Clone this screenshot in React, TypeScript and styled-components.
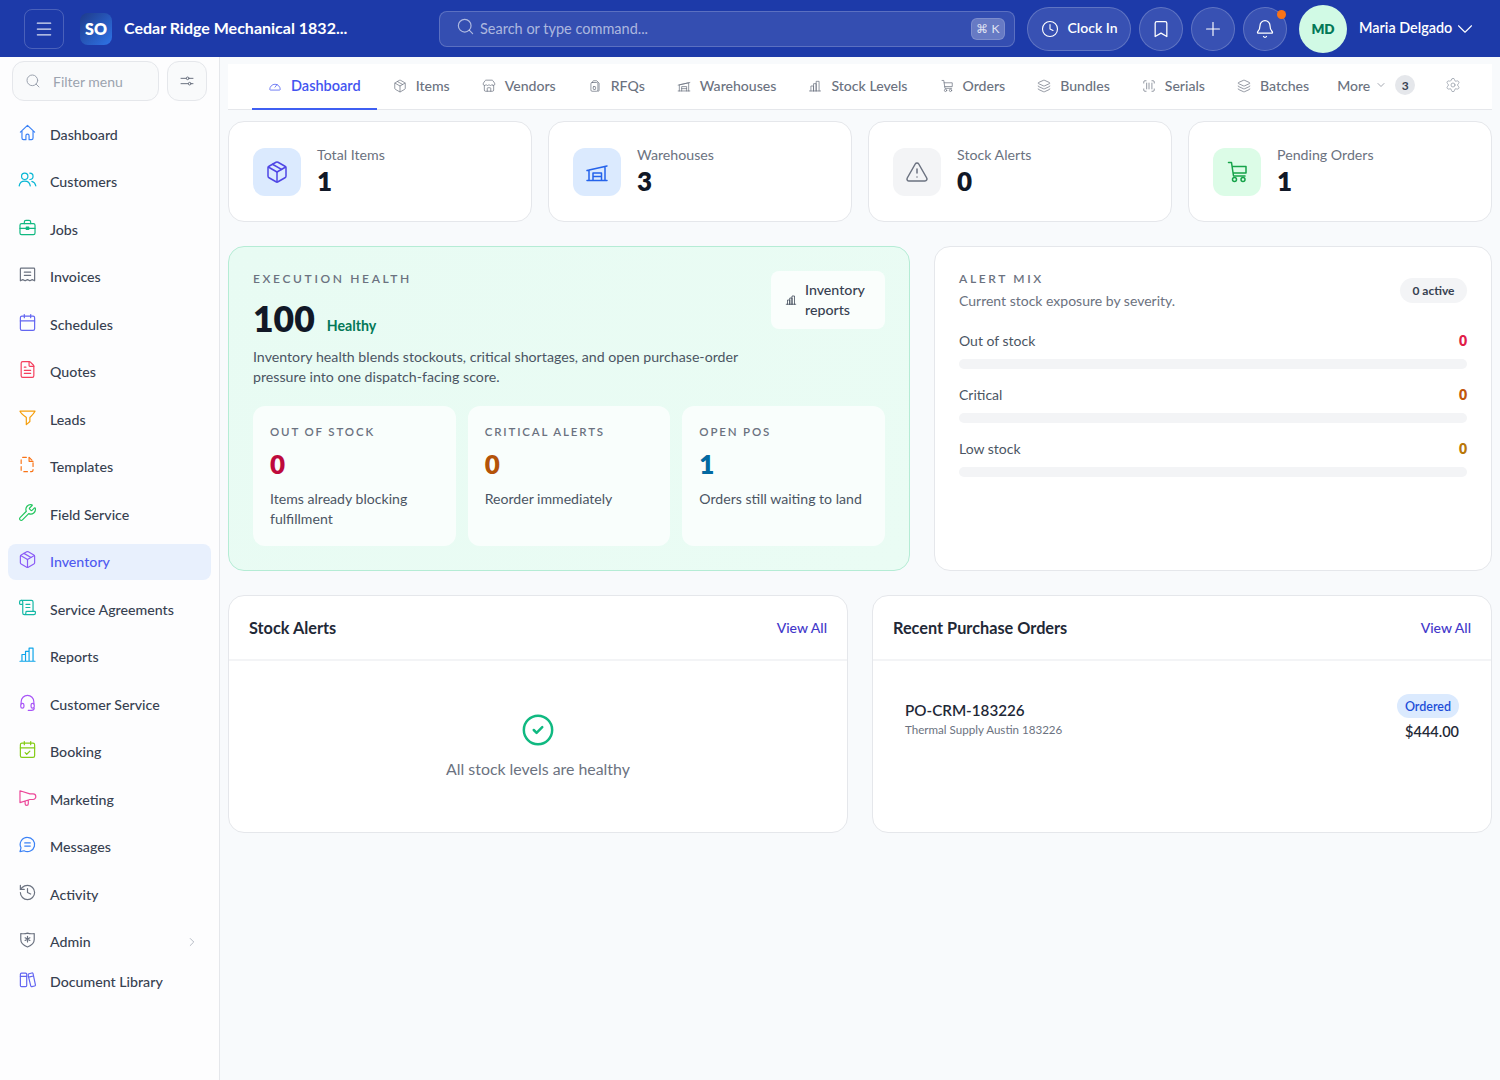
import React from "react";
import styled, { createGlobalStyle } from "styled-components";
import {
  Bell, Bookmark, Calendar, CalendarCheck, ChevronDown, ChevronRight, CircleCheck, Clock,
  FileText, History, Layers, Menu, Package, Plus, ScanBarcode, ScrollText, Search, Settings,
  Store, TriangleAlert, Wrench,
} from "lucide-react";

const font = `"Lato", "Noto Sans", sans-serif`;

const GlobalStyle = createGlobalStyle`
  * { box-sizing: border-box; }
  html, body { margin: 0; padding: 0; background: #f8fafc; font-family: ${font}; }
  #root { min-height: 1080px; }
`;

type IconProps = { size?: number; strokeWidth?: number; color?: string };

const Svg = ({ size = 20, strokeWidth = 1.5, color = "currentColor", children }: IconProps & { children: React.ReactNode }) => (
  <svg width={size} height={size} viewBox="0 0 24 24" fill="none" stroke={color} strokeWidth={strokeWidth} strokeLinecap="round" strokeLinejoin="round" style={{ flexShrink: 0 }}>
    {children}
  </svg>
);

const HomeIcon = (p: IconProps) => (
  <Svg {...p}><path d="M3 11.5 12 3l9 8.5M5 9.5V19a2 2 0 0 0 2 2h3v-5a2 2 0 0 1 4 0v5h3a2 2 0 0 0 2-2V9.5" /></Svg>
);
const UsersIcon = (p: IconProps) => (
  <Svg {...p}><circle cx="8.5" cy="8" r="4" /><path d="M1.5 20c.6-3.800 3.200-6 7-6s6.400 2.200 7 6M15 4a4 4 0 0 1 0 8M17.500 14.300c2.800.7 4.400 2.800 5 5.700" /></Svg>
);
const BriefcaseIcon = (p: IconProps) => (
  <Svg {...p}>
    <rect x="2.500" y="7" width="19" height="14" rx="2" />
    <path d="M8 7V5a2 2 0 0 1 2-2h4a2 2 0 0 1 2 2v2M2.500 13h19M10.500 11.500h3v3h-3z" />
  </Svg>
);
const ReceiptIcon = (p: IconProps) => (
  <Svg {...p}><path d="M3 5a1 1 0 0 1 1-1h16a1 1 0 0 1 1 1v15l-3-1.500-3 1.500-3-1.500-3 1.500-3-1.500L3 20zM8 9h8M8 13h8" /></Svg>
);
const FunnelIcon = (p: IconProps) => (
  <Svg {...p}><path d="M2.500 4h19c-1.500 3-4.500 6-6.500 8v5l-4.500 4v-9C8 10 4 7 2.500 4z" /></Svg>
);
const DashedFileIcon = (p: IconProps) => (
  <Svg {...p}>
    <path d="M6 3h8l5 5v11a2 2 0 0 1-2 2H6a2 2 0 0 1-2-2V5a2 2 0 0 1 2-2z" strokeDasharray="4.500 4" />
    <path d="M14 3v5h5" />
  </Svg>
);
const ChartIcon = (p: IconProps) => (
  <Svg {...p}><path d="M2.500 20.500h19M5 20.500V12h4.500v8.500M9.500 20.500V8H14v12.500M14 20.500V4h5v16.500" /></Svg>
);
const HeadsetIcon = (p: IconProps) => (
  <Svg {...p}>
    <path d="M4 14v-3a8 8 0 0 1 16 0v3" />
    <rect x="3.500" y="13" width="4" height="6" rx="2" />
    <rect x="16.500" y="13" width="4" height="6" rx="2" />
    <path d="M20.500 19c0 2-1.500 3-3.500 3h-4" />
  </Svg>
);
const MegaphoneIcon = (p: IconProps) => (
  <Svg {...p}><path d="M2.500 3.500 15 7.500h4a3.500 3.500 0 0 1 0 7h-4l-12.500 4zM9 16.500V20a2 2 0 0 0 4 0v-4" /></Svg>
);
const BubbleIcon = (p: IconProps) => (
  <Svg {...p}><path d="M12 3a9 9 0 1 1-4.300 16.900L2.500 21l1.300-4.800A9 9 0 0 1 12 3zM8.500 10h7M8.500 14h7" /></Svg>
);
const ShieldStarIcon = (p: IconProps) => (
  <Svg {...p}><path d="M3.500 4.500c3 .4 5.800.4 8.500-.5 2.700.9 5.500.9 8.500.5v7.500c0 4.500-3.500 7.500-8.500 9.500-5-2-8.500-5-8.500-9.500zM12 8v7M9 9.800l6 3.400M15 9.800l-6 3.400" /></Svg>
);
const BooksIcon = (p: IconProps) => (
  <Svg {...p}>
    <rect x="3" y="4" width="8" height="17" rx="1.500" />
    <path d="M3 8h8M13 5l4.500-1.200a1.200 1.200 0 0 1 1.500.9l3 14a1.200 1.200 0 0 1-.9 1.500l-3.500.8a1.200 1.200 0 0 1-1.500-.9L13 7.500zM13.500 9l6-1.400" />
  </Svg>
);
const RfqIcon = (p: IconProps) => (
  <Svg {...p}>
    <path d="M8 6V4.500A1.500 1.500 0 0 1 9.500 3H15l4 4v12.500a1.500 1.500 0 0 1-1.500 1.500H17" />
    <rect x="5" y="6" width="12" height="15" rx="2" />
    <rect x="9" y="13" width="4" height="5" rx="1" />
  </Svg>
);
const WarehouseIcon = (p: IconProps) => (
  <Svg {...p}><path d="M2 20.500h20M4 20.500V10l16-3.500v14M2 10.500 22 6M8 20.500V13h8.500v7.500M8 16.500h8.500" /></Svg>
);
const GaugeIcon = (p: IconProps) => (
  <Svg {...p}><path d="M4 19a1 1 0 0 1-1-1 9 9 0 0 1 18 0 1 1 0 0 1-1 1zM12 14l3.500-4.500" /></Svg>
);
const CartIcon = (p: IconProps) => (
  <Svg {...p}>
    <path d="M3.500 2.500h3l2 13.500h11.500M7.200 6.500H21v6.500H8.200" />
    <circle cx="9.500" cy="19.500" r="2" />
    <circle cx="18" cy="19.500" r="2" />
  </Svg>
);
const SlidersIcon = (p: IconProps) => (
  <Svg {...p}>
    <path d="M3 8h8M15 8h6M3 16h11M18 16h3" />
    <circle cx="13" cy="8" r="2" />
    <circle cx="16" cy="16" r="2" />
  </Svg>
);

const tabs = [
  { label: "Dashboard", icon: GaugeIcon, active: true },
  { label: "Items", icon: Package },
  { label: "Vendors", icon: Store },
  { label: "RFQs", icon: RfqIcon },
  { label: "Warehouses", icon: WarehouseIcon },
  { label: "Stock Levels", icon: ChartIcon },
  { label: "Orders", icon: CartIcon },
  { label: "Bundles", icon: Layers },
  { label: "Serials", icon: ScanBarcode },
  { label: "Batches", icon: Layers },
];

const navItems = [
  { label: "Dashboard", icon: HomeIcon, color: "#3b82f6" },
  { label: "Customers", icon: UsersIcon, color: "#06b6d4" },
  { label: "Jobs", icon: BriefcaseIcon, color: "#10b981" },
  { label: "Invoices", icon: ReceiptIcon, color: "#6b7280" },
  { label: "Schedules", icon: Calendar, color: "#6366f1" },
  { label: "Quotes", icon: FileText, color: "#f43f5e" },
  { label: "Leads", icon: FunnelIcon, color: "#f59e0b" },
  { label: "Templates", icon: DashedFileIcon, color: "#f97316" },
  { label: "Field Service", icon: Wrench, color: "#22c55e" },
  { label: "Inventory", icon: Package, color: "#8b5cf6", active: true },
  { label: "Service Agreements", icon: ScrollText, color: "#14b8a6" },
  { label: "Reports", icon: ChartIcon, color: "#0ea5e9" },
  { label: "Customer Service", icon: HeadsetIcon, color: "#a855f7" },
  { label: "Booking", icon: CalendarCheck, color: "#84cc16" },
  { label: "Marketing", icon: MegaphoneIcon, color: "#ec4899" },
  { label: "Messages", icon: BubbleIcon, color: "#3b82f6" },
  { label: "Activity", icon: History, color: "#6b7280" },
  { label: "Admin", icon: ShieldStarIcon, color: "#6b7280", chevron: true, tight: true },
  { label: "Document Library", icon: BooksIcon, color: "#6366f1" },
];

const stats = [
  { label: "Total Items", value: "1", icon: Package, bg: "#dbeafe", color: "#4f46e5" },
  { label: "Warehouses", value: "3", icon: WarehouseIcon, bg: "#dbeafe", color: "#2563eb" },
  { label: "Stock Alerts", value: "0", icon: TriangleAlert, bg: "#f3f4f6", color: "#6b7280" },
  { label: "Pending Orders", value: "1", icon: CartIcon, bg: "#dcfce7", color: "#16a34a" },
];

const healthCells = [
  { label: "OUT OF STOCK", value: "0", color: "#be0a3c", note: "Items already blocking fulfillment" },
  { label: "CRITICAL ALERTS", value: "0", color: "#b45309", note: "Reorder immediately" },
  { label: "OPEN POS", value: "1", color: "#0369a1", note: "Orders still waiting to land" },
];

const mixRows = [
  { label: "Out of stock", color: "#e11d48" },
  { label: "Critical", color: "#c2560c" },
  { label: "Low stock", color: "#b97708" },
];

// Top bar
const TopBar = styled.header`
  height: 57px;
  background: #1d3aa9;
  display: flex;
  align-items: center;
  padding: 0 24px;
  color: #fff;
  > * {
    flex-shrink: 0;
  }
`;
const Brand = styled.div`
  width: 415px;
  display: flex;
  align-items: center;
`;
const MenuButton = styled.div`
  width: 40px;
  height: 40px;
  border: 1px solid rgba(255, 255, 255, 0.2);
  border-radius: 8px;
  display: flex;
  align-items: center;
  justify-content: center;
  color: rgba(255, 255, 255, 0.85);
  margin-right: 16px;
`;
const Logo = styled.div`
  width: 32px;
  height: 32px;
  border-radius: 8px;
  background: linear-gradient(135deg, #1e3a8a, #2f74e8);
  display: flex;
  align-items: center;
  justify-content: center;
  font-size: 16px;
  font-weight: 800;
  margin-right: 12px;
`;
const BrandName = styled.div`
  font-size: 16px;
  font-weight: 700;
  white-space: nowrap;
  padding-bottom: 2px;
`;
const SearchBox = styled.div`
  width: 576px;
  height: 36px;
  border: 1px solid rgba(255, 255, 255, 0.2);
  border-radius: 8px;
  background: rgba(255, 255, 255, 0.1);
  display: flex;
  align-items: center;
  padding: 0 9px 0 16px;
  gap: 5px;
  color: rgba(255, 255, 255, 0.6);
  font-size: 14.500px;
  margin-right: 12px;
  span {
    flex: 1;
  }
  svg {
    margin-top: -4px;
  }
`;
const Kbd = styled.div`
  width: 34px;
  height: 22px;
  border-radius: 6px;
  background: rgba(255, 255, 255, 0.25);
  border: 1px solid rgba(255, 255, 255, 0.15);
  font-size: 12px;
  display: flex;
  align-items: center;
  justify-content: center;
  color: rgba(255, 255, 255, 0.8);
`;
const ClockButton = styled.div`
  width: 104px;
  height: 44px;
  border-radius: 22px;
  background: rgba(255, 255, 255, 0.12);
  border: 1px solid rgba(255, 255, 255, 0.2);
  display: flex;
  align-items: center;
  justify-content: center;
  gap: 9px;
  font-size: 14px;
  font-weight: 600;
  margin-right: 8px;
  span {
    padding-bottom: 2px;
  }
`;
const RoundButton = styled.div`
  position: relative;
  width: 44px;
  height: 44px;
  border-radius: 50%;
  background: rgba(255, 255, 255, 0.12);
  border: 1px solid rgba(255, 255, 255, 0.2);
  display: flex;
  align-items: center;
  justify-content: center;
  margin-right: 8px;
`;
const NotifyDot = styled.span`
  position: absolute;
  top: 2px;
  right: 0;
  width: 9px;
  height: 9px;
  border-radius: 50%;
  background: #f97316;
`;
const Avatar = styled.div`
  width: 48px;
  height: 48px;
  border-radius: 50%;
  background: #d1fae5;
  color: #047857;
  display: flex;
  align-items: center;
  justify-content: center;
  font-size: 13.500px;
  font-weight: 800;
  margin: 0 12px 0 4px;
`;
const UserName = styled.div`
  font-size: 14.400px;
  font-weight: 600;
  white-space: nowrap;
  padding-bottom: 2px;
`;

// Page frame
const Body = styled.div`
  display: flex;
  min-height: 1023px;
`;
const Sidebar = styled.aside`
  width: 220px;
  flex-shrink: 0;
  background: #fdfdfe;
  border-right: 1px solid #e5e7eb;
  padding-top: 4px;
`;
const FilterRow = styled.div`
  display: flex;
  gap: 8px;
  padding: 0 12px;
  margin-bottom: 15.600px;
`;
const FilterInput = styled.div`
  width: 147px;
  height: 40px;
  border: 1px solid #e5e7eb;
  border-radius: 12px;
  background: #f9fafb;
  display: flex;
  align-items: center;
  gap: 12px;
  padding: 0 12px;
  color: #9ca3af;
  font-size: 14px;
`;
const FilterButton = styled.div`
  width: 40px;
  height: 40px;
  border: 1px solid #e5e7eb;
  border-radius: 12px;
  background: #f9fafb;
  color: #6b7280;
  display: flex;
  align-items: center;
  justify-content: center;
`;
const NavList = styled.nav`
  padding: 0 8px;
  display: flex;
  flex-direction: column;
`;
const NavRow = styled.div<{ $active?: boolean; $tight?: boolean }>`
  height: 35.500px;
  margin-bottom: ${(p) => (p.$tight ? "4.500px" : "12px")};
  padding: 0 12px 0 10px;
  width: 203px;
  border-radius: 8px;
  display: flex;
  align-items: center;
  gap: 13px;
  font-size: 14.200px;
  font-weight: 500;
  color: ${(p) => (p.$active ? "#4f5bf0" : "#374151")};
  background: ${(p) => (p.$active ? "#e8f0fd" : "transparent")};
  svg:first-child {
    position: relative;
    top: -2px;
    flex-shrink: 0;
  }
`;
const NavLabel = styled.span`
  flex: 1;
  white-space: nowrap;
`;
const Main = styled.main`
  flex: 1;
  min-width: 0;
  padding: 7px 8px 0;
`;

// Tabs
const TabBar = styled.div`
  height: 46px;
  background: #fff;
  border-bottom: 1px solid #e5e7eb;
  padding-left: 24px;
  display: flex;
  align-items: stretch;
  margin-bottom: 11px;
`;
const Tab = styled.div<{ $active?: boolean }>`
  display: flex;
  align-items: center;
  gap: 9px;
  padding: 0 16px 1px;
  font-size: ${(p) => (p.$active ? "14.500px" : "14.080px")};
  font-weight: ${(p) => (p.$active ? 600 : 500)};
  color: ${(p) => (p.$active ? "#4354f0" : "#6b7280")};
  border-bottom: 2px solid ${(p) => (p.$active ? "#3f5ff2" : "transparent")};
  margin-bottom: -1px;
  white-space: nowrap;
`;
const MoreTab = styled.div`
  display: flex;
  align-items: center;
  gap: 5px;
  padding: 0 0 3px 12px;
  font-size: 14px;
  font-weight: 500;
  color: #6b7280;
`;
const CountBadge = styled.span`
  width: 20px;
  height: 20px;
  border-radius: 50%;
  background: #e5e7eb;
  color: #374151;
  font-size: 12px;
  font-weight: 700;
  display: flex;
  align-items: center;
  justify-content: center;
  margin-left: 3px;
`;
const GearSlot = styled.div`
  display: flex;
  align-items: center;
  padding: 0 0 3px 30px;
  color: #9ca3af;
`;

// Cards
const StatGrid = styled.div`
  display: grid;
  grid-template-columns: repeat(4, 1fr);
  gap: 16px;
  margin-bottom: 24px;
`;
const StatCard = styled.div`
  height: 101px;
  background: #fff;
  border: 1px solid #e5e7eb;
  border-radius: 16px;
  padding: 0 24px;
  display: flex;
  align-items: center;
  gap: 16px;
`;
const StatIcon = styled.div<{ $bg: string }>`
  width: 48px;
  height: 48px;
  border-radius: 12px;
  background: ${(p) => p.$bg};
  display: flex;
  align-items: center;
  justify-content: center;
`;
const StatLabel = styled.div`
  font-size: 14.200px;
  color: #6b7280;
  line-height: 20px;
  margin-top: -1px;
`;
const StatValue = styled.div`
  font-size: 26px;
  font-weight: 800;
  color: #111827;
  line-height: 32px;
`;
const MidGrid = styled.div`
  display: grid;
  grid-template-columns: 682px 558px;
  gap: 24px;
  margin-bottom: 24px;
`;
const HealthCard = styled.section`
  height: 325px;
  border: 1px solid #b5ecd5;
  border-radius: 16px;
  background: linear-gradient(135deg, #e8fbf3, #eafcf4);
  padding: 24px;
`;
const HealthTop = styled.div`
  display: flex;
  justify-content: space-between;
  align-items: flex-start;
  height: 135px;
`;
const Eyebrow = styled.div`
  font-size: 12px;
  font-weight: 600;
  letter-spacing: 0.22em;
  color: #6b7280;
  line-height: 16px;
`;
const ScoreLine = styled.div`
  display: flex;
  align-items: center;
  gap: 12px;
  margin-top: 10px;
`;
const Score = styled.div`
  font-size: 35.500px;
  font-weight: 800;
  line-height: 44px;
  color: #111827;
`;
const ScoreTag = styled.div`
  font-size: 14.200px;
  font-weight: 700;
  color: #047857;
  margin-top: 12px;
`;
const HealthText = styled.p`
  margin: 6px 0 0;
  width: 500px;
  font-size: 14.200px;
  line-height: 20px;
  color: #4b5563;
`;
const ReportsButton = styled.div`
  width: 114px;
  height: 58px;
  background: rgba(255, 255, 255, 0.75);
  border-radius: 8px;
  display: flex;
  align-items: center;
  gap: 8px;
  padding: 0 14px;
  font-size: 14.200px;
  font-weight: 500;
  line-height: 20px;
  color: #374151;
`;
const CellGrid = styled.div`
  display: grid;
  grid-template-columns: repeat(3, 1fr);
  gap: 12px;
`;
const Cell = styled.div`
  height: 140px;
  background: rgba(255, 255, 255, 0.72);
  border-radius: 12px;
  padding: 17px;
`;
const CellLabel = styled.div`
  font-size: 11.500px;
  font-weight: 600;
  letter-spacing: 0.16em;
  color: #6b7280;
  line-height: 18px;
`;
const CellValue = styled.div<{ $color: string }>`
  font-size: 26px;
  font-weight: 800;
  line-height: 32px;
  color: ${(p) => p.$color};
  margin: 7px 0 9px;
`;
const CellNote = styled.div`
  font-size: 14.100px;
  line-height: 20px;
  color: #4b5563;
`;
const MixCard = styled.section`
  height: 325px;
  background: #fff;
  border: 1px solid #e5e7eb;
  border-radius: 16px;
  padding: 24px;
`;
const MixHead = styled.div`
  display: flex;
  justify-content: space-between;
  align-items: flex-start;
  margin-bottom: 20px;
`;
const MixSub = styled.div`
  font-size: 14px;
  line-height: 20px;
  color: #6b7280;
  margin-top: 4px;
`;
const ActiveBadge = styled.div`
  height: 25px;
  width: 67px;
  border-radius: 13px;
  background: #f3f4f6;
  color: #374151;
  font-size: 12px;
  font-weight: 700;
  display: flex;
  align-items: center;
  justify-content: center;
  margin-top: 7px;
`;
const MixRow = styled.div`
  display: flex;
  justify-content: space-between;
  font-size: 14px;
  line-height: 20px;
  color: #4b5563;
  margin-bottom: 8px;
`;
const MixValue = styled.span<{ $color: string }>`
  font-weight: 800;
  color: ${(p) => p.$color};
`;
const Track = styled.div`
  height: 10px;
  border-radius: 5px;
  background: #f3f4f6;
  margin-bottom: 16px;
`;
const BottomGrid = styled.div`
  display: grid;
  grid-template-columns: 1fr 1fr;
  gap: 24px;
`;
const PanelCard = styled.section`
  height: 238px;
  background: #fff;
  border: 1px solid #e5e7eb;
  border-radius: 16px;
  overflow: hidden;
`;
const PanelHead = styled.div`
  height: 65px;
  border-bottom: 2px solid #f3f4f6;
  padding: 0 20px;
  display: flex;
  align-items: center;
  justify-content: space-between;
`;
const PanelTitle = styled.div`
  font-size: 16.300px;
  font-weight: 700;
  color: #1f2937;
`;
const ViewAll = styled.a`
  font-size: 14px;
  font-weight: 500;
  color: #4338ca;
`;
const EmptyState = styled.div`
  height: 171px;
  display: flex;
  flex-direction: column;
  align-items: center;
  justify-content: center;
  gap: 12px;
  font-size: 15.900px;
  color: #6b7280;
  padding-bottom: 2px;
`;
const OrderRow = styled.div`
  display: flex;
  justify-content: space-between;
  padding: 33px 32px 0;
`;
const OrderCode = styled.div`
  font-size: 15.200px;
  font-weight: 600;
  color: #1f2937;
  line-height: 24px;
  margin-top: 4px;
`;
const OrderVendor = styled.div`
  font-size: 11.600px;
  color: #6b7280;
  line-height: 16px;
`;
const OrderSide = styled.div`
  display: flex;
  flex-direction: column;
  align-items: flex-end;
  gap: 2px;
`;
const StatusPill = styled.div`
  height: 24px;
  padding: 0 8px;
  border-radius: 12px;
  background: #dbeafe;
  color: #1d4ed8;
  font-size: 12.500px;
  font-weight: 600;
  display: flex;
  align-items: center;
`;
const OrderAmount = styled.div`
  font-size: 14.500px;
  font-weight: 600;
  color: #1f2937;
  line-height: 24px;
`;

export default function App() {
  return (
    <>
      <GlobalStyle />
      <TopBar>
        <Brand>
          <MenuButton><Menu size={20} strokeWidth={1.5} /></MenuButton>
          <Logo>SO</Logo>
          <BrandName>Cedar Ridge Mechanical 1832...</BrandName>
        </Brand>
        <SearchBox>
          <Search size={19} strokeWidth={1.5} />
          <span>Search or type command...</span>
          <Kbd>⌘ K</Kbd>
        </SearchBox>
        <ClockButton><Clock size={18} strokeWidth={1.5} /><span>Clock In</span></ClockButton>
        <RoundButton><Bookmark size={20} strokeWidth={1.5} /></RoundButton>
        <RoundButton><Plus size={22} strokeWidth={1.25} /></RoundButton>
        <RoundButton><Bell size={20} strokeWidth={1.5} /><NotifyDot /></RoundButton>
        <Avatar>MD</Avatar>
        <UserName>Maria Delgado</UserName>
        <ChevronDown size={26} strokeWidth={1} />
      </TopBar>
      <Body>
        <Sidebar>
          <FilterRow>
            <FilterInput><Search size={16} strokeWidth={1.5} />Filter menu</FilterInput>
            <FilterButton><SlidersIcon size={16} strokeWidth={1.5} /></FilterButton>
          </FilterRow>
          <NavList>
            {navItems.map((item) => {
              const Icon = item.icon;
              return (
                <NavRow key={item.label} $active={item.active} $tight={item.tight}>
                  <Icon size={19} strokeWidth={1.5} color={item.color} />
                  <NavLabel>{item.label}</NavLabel>
                  {item.chevron && <ChevronRight size={14} strokeWidth={1.25} color="#9ca3af" />}
                </NavRow>
              );
            })}
          </NavList>
        </Sidebar>
        <Main>
          <TabBar>
            {tabs.map((tab) => {
              const Icon = tab.icon;
              return (
                <Tab key={tab.label} $active={tab.active}>
                  <Icon size={14} strokeWidth={1.25} />
                  {tab.label}
                </Tab>
              );
            })}
            <MoreTab>
              More
              <ChevronDown size={12} strokeWidth={1.25} />
              <CountBadge>3</CountBadge>
            </MoreTab>
            <GearSlot><Settings size={16} strokeWidth={1.25} /></GearSlot>
          </TabBar>

          <StatGrid>
            {stats.map((stat) => {
              const Icon = stat.icon;
              return (
                <StatCard key={stat.label}>
                  <StatIcon $bg={stat.bg}><Icon size={24} strokeWidth={1.5} color={stat.color} /></StatIcon>
                  <div>
                    <StatLabel>{stat.label}</StatLabel>
                    <StatValue>{stat.value}</StatValue>
                  </div>
                </StatCard>
              );
            })}
          </StatGrid>

          <MidGrid>
            <HealthCard>
              <HealthTop>
                <div>
                  <Eyebrow>EXECUTION HEALTH</Eyebrow>
                  <ScoreLine>
                    <Score>100</Score>
                    <ScoreTag>Healthy</ScoreTag>
                  </ScoreLine>
                  <HealthText>
                    Inventory health blends stockouts, critical shortages, and open purchase-order pressure into one dispatch-facing score.
                  </HealthText>
                </div>
                <ReportsButton>
                  <ChartIcon size={12} strokeWidth={1.5} />
                  <span>Inventory reports</span>
                </ReportsButton>
              </HealthTop>
              <CellGrid>
                {healthCells.map((cell) => (
                  <Cell key={cell.label}>
                    <CellLabel>{cell.label}</CellLabel>
                    <CellValue $color={cell.color}>{cell.value}</CellValue>
                    <CellNote>{cell.note}</CellNote>
                  </Cell>
                ))}
              </CellGrid>
            </HealthCard>
            <MixCard>
              <MixHead>
                <div>
                  <Eyebrow>ALERT MIX</Eyebrow>
                  <MixSub>Current stock exposure by severity.</MixSub>
                </div>
                <ActiveBadge>0 active</ActiveBadge>
              </MixHead>
              {mixRows.map((row) => (
                <React.Fragment key={row.label}>
                  <MixRow>
                    <span>{row.label}</span>
                    <MixValue $color={row.color}>0</MixValue>
                  </MixRow>
                  <Track />
                </React.Fragment>
              ))}
            </MixCard>
          </MidGrid>

          <BottomGrid>
            <PanelCard>
              <PanelHead>
                <PanelTitle>Stock Alerts</PanelTitle>
                <ViewAll>View All</ViewAll>
              </PanelHead>
              <EmptyState>
                <CircleCheck size={34} strokeWidth={1.75} color="#10b981" />
                All stock levels are healthy
              </EmptyState>
            </PanelCard>
            <PanelCard>
              <PanelHead>
                <PanelTitle>Recent Purchase Orders</PanelTitle>
                <ViewAll>View All</ViewAll>
              </PanelHead>
              <OrderRow>
                <div>
                  <OrderCode>PO-CRM-183226</OrderCode>
                  <OrderVendor>Thermal Supply Austin 183226</OrderVendor>
                </div>
                <OrderSide>
                  <StatusPill>Ordered</StatusPill>
                  <OrderAmount>$444.00</OrderAmount>
                </OrderSide>
              </OrderRow>
            </PanelCard>
          </BottomGrid>
        </Main>
      </Body>
    </>
  );
}
